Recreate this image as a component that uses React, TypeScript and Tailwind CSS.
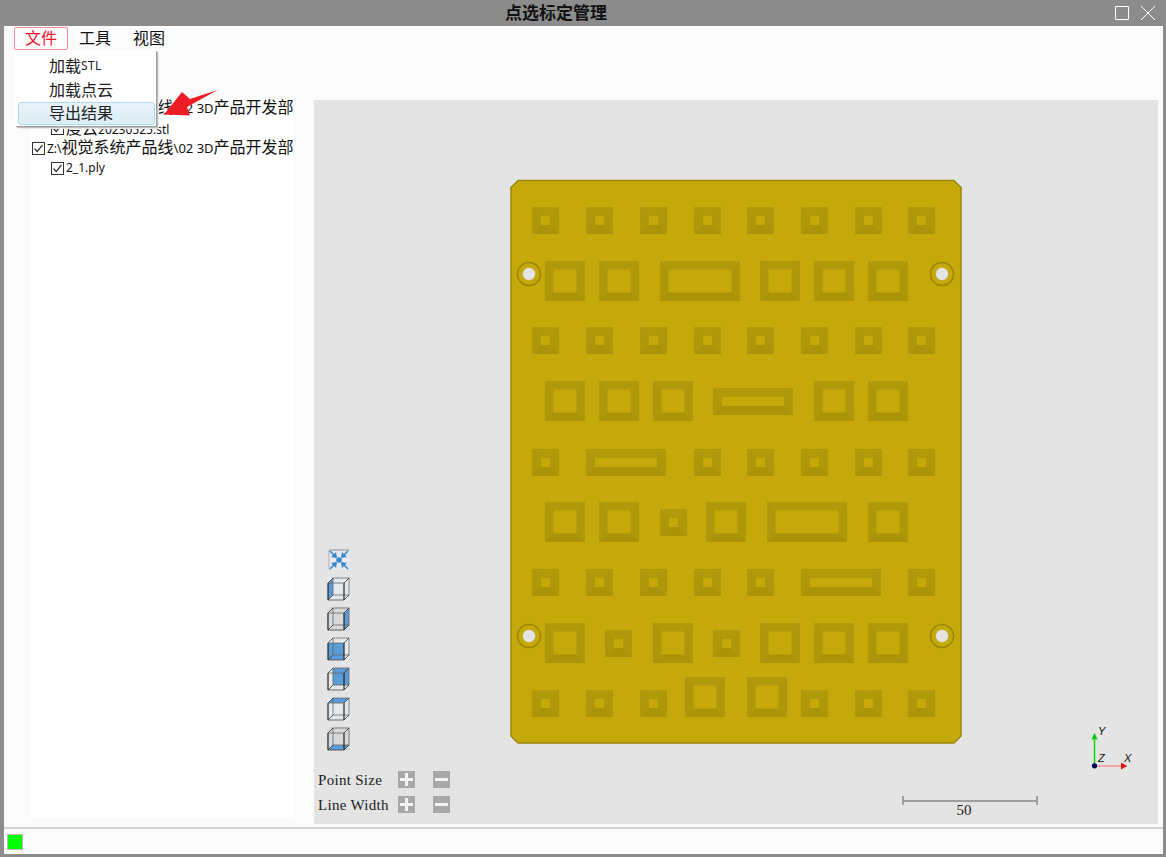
const cjk = '[font-family:"Noto_Sans","Noto_Sans_CJK_SC",sans-serif]';

type Sq = [number, number, number, number];

const S = 27;
const L = 40;

// x, y (top-left), w, h of every recess on the plate
const recesses: Sq[] = [
  ...[532, 586, 640, 694, 747, 801, 855, 908].map((x): Sq => [x, 207, S, S]),
  [545, 261, L, L], [599, 261, L, L], [660, 261, 80, L], [760, 261, L, L], [814, 261, L, L], [868, 261, L, L],
  ...[532, 586, 640, 694, 747, 801, 855, 908].map((x): Sq => [x, 327, S, S]),
  [545, 381, L, L], [599, 381, L, L], [653, 381, L, L], [713, 388, 80, S], [814, 381, L, L], [868, 381, L, L],
  [532, 449, S, S], [586, 449, 80, S], [694, 449, S, S], [747, 449, S, S], [801, 449, S, S], [855, 449, S, S], [908, 449, S, S],
  [545, 502, L, L], [599, 502, L, L], [660, 509, S, S], [706, 502, L, L], [767, 502, 80, L], [868, 502, L, L],
  [532, 569, S, S], [586, 569, S, S], [640, 569, S, S], [694, 569, S, S], [747, 569, S, S], [801, 569, 80, S], [908, 569, S, S],
  [545, 623, L, L], [605, 630, S, S], [653, 623, L, L], [713, 630, S, S], [760, 623, L, L], [814, 623, L, L], [868, 623, L, L],
  [532, 690, S, S], [586, 690, S, S], [640, 690, S, S], [685, 677, L, L], [747, 677, L, L], [801, 690, S, S], [855, 690, S, S], [908, 690, S, S],
];

const holes = [[529, 274], [942, 274], [529, 636], [942, 636]];

function Recess({ r }: { r: Sq }) {
  const [x, y, w, h] = r;
  const b = h === L ? 8.5 : 9;
  const x2 = x + w;
  const y2 = y + h;
  return (
    <g>
      <rect x={x} y={y} width={w} height={h} fill="#ae970a" />
      <polygon points={`${x},${y2} ${x + b},${y2 - b} ${x2 - b},${y2 - b} ${x2},${y2}`} fill="#aa9309" />
      <polygon points={`${x},${y} ${x + b},${y + b} ${x2 - b},${y + b} ${x2},${y}`} fill="#b09a0a" />
      <rect x={x + b} y={y + b} width={w - 2 * b} height={h - 2 * b} fill="#c5a809" />
    </g>
  );
}

function Plate() {
  return (
    <svg className="absolute inset-0" width="844" height="724" viewBox="314 100 844 724">
      <polygon
        points="518,180.5 954,180.5 961,187.5 961,736 954,743 518,743 511,736 511,187.5"
        fill="#c5a809"
        stroke="#9b8608"
        strokeWidth="1.5"
      />
      {recesses.map((r, i) => (
        <Recess key={i} r={r} />
      ))}
      {holes.map(([cx, cy]) => (
        <g key={cx + '-' + cy}>
          <circle cx={cx} cy={cy} r="11.5" fill="#c5a809" stroke="#9b8608" strokeWidth="1.5" />
          <circle cx={cx} cy={cy} r="6.5" fill="#e4e4e4" stroke="#b39c10" strokeWidth="0.5" />
        </g>
      ))}
      {/* axis triad */}
      <line x1="1094.5" y1="765.5" x2="1094.5" y2="740" stroke="#00e000" strokeWidth="1.5" />
      <polygon points="1094.5,733 1091.5,739.5 1097.5,739.5" fill="#00c800" />
      <line x1="1094.5" y1="766" x2="1127" y2="766" stroke="#f4a6a6" strokeWidth="2" />
      <polygon points="1127,766 1121,762.5 1121,769.5" fill="#e01010" />
      <circle cx="1094.5" cy="765.8" r="2.6" fill="#00005a" />
      <text x="1098" y="735" fontSize="11" fontStyle="italic" fontFamily="Liberation Sans, sans-serif" fill="#111">Y</text>
      <text x="1098" y="762" fontSize="11" fontStyle="italic" fontFamily="Liberation Sans, sans-serif" fill="#111">Z</text>
      <text x="1124" y="762" fontSize="11" fontStyle="italic" fontFamily="Liberation Sans, sans-serif" fill="#111">X</text>
    </svg>
  );
}

type Face = 'left' | 'right' | 'front' | 'back' | 'top' | 'bottom';

const faces: Record<Face, string> = {
  left: '1,6 6,1 6,18 1,23',
  right: '17,6 22,1 22,18 17,23',
  front: '1,6 17,6 17,23 1,23',
  back: '6,1 22,1 22,18 6,18',
  top: '1,6 6,1 22,1 17,6',
  bottom: '1,23 6,18 22,18 17,23',
};

function CubeIcon({ face, dark }: { face: Face; dark?: boolean }) {
  return (
    <svg width="24" height="24" viewBox="0 0 24 24" className="block">
      <rect x="0" y="0" width="23" height="24" fill={dark ? '#d6d8da' : '#e6e9ec'} />
      <polygon points={faces[face]} fill="#5b9bd8" />
      <g fill="none" stroke="#333" strokeWidth="0.8">
        <rect x="6" y="1" width="16" height="17" stroke="#666" />
        <path d="M1 6 6 1M17 6 22 1M17 23 22 18M1 23 6 18" />
        <path d="M1 6V23" strokeWidth="1.2" stroke="#222" />
        <path d="M17 6V23" strokeWidth="1.2" stroke="#222" />
        <path d="M1 6H17" stroke="#666" />
        <path d="M1 23H17" stroke="#444" />
      </g>
    </svg>
  );
}

function FitIcon() {
  return (
    <svg width="24" height="24" viewBox="0 0 24 24" className="block -mb-[1px]">
      <rect x="2" y="2" width="20" height="20" fill="#e6eaee" />
      <path d="M2 2H22" stroke="#8a8f96" strokeWidth="1" />
      <path d="M2 2V22" stroke="#aab0b8" strokeWidth="1" />
      <g stroke="#3d86cc" strokeWidth="1.6">
        <path d="M3 3 9 9M21 3 15 9M3 21 9 15M21 21 15 15" />
      </g>
      <g fill="#3d86cc">
        <circle cx="12" cy="12" r="2.8" />
        <polygon points="10,10 4,9 9,4" />
        <polygon points="14,10 20,9 15,4" />
        <polygon points="10,14 4,15 9,20" />
        <polygon points="14,14 20,15 15,20" />
      </g>
    </svg>
  );
}

function SizeButton({ minus }: { minus?: boolean }) {
  return (
    <button className="w-[17px] h-[17px] bg-[#a8a8a8] flex items-center justify-center">
      <svg width="13" height="13" viewBox="0 0 13 13">
        <rect x="0" y="5" width="13" height="3" fill="#f4f4f4" />
        {!minus && <rect x="5" y="0" width="3" height="13" fill="#f4f4f4" />}
      </svg>
    </button>
  );
}

function SizeRow({ label }: { label: string }) {
  return (
    <div className="flex items-center h-[17px]">
      <span className="w-[80px] mt-[2px] text-[15px] text-[#222] [font-family:'Liberation_Serif',serif] tracking-[0.3px]">{label}</span>
      <SizeButton />
      <span className="w-[18px]" />
      <SizeButton minus />
    </div>
  );
}

function Check({ left }: { left: string }) {
  return (
    <span className={`${left} w-[13px] h-[13px] shrink-0 border border-[#333] bg-white flex items-center justify-center`}>
      <svg width="11" height="11" viewBox="0 0 11 11">
        <path d="M1.5 5.5 4.2 8.5 9.5 2" fill="none" stroke="#333" strokeWidth="1.2" />
      </svg>
    </span>
  );
}

function TreeRoot() {
  return (
    <div className="h-[20px] flex items-center whitespace-nowrap">
      <Check left="ml-[3px]" />
      <span className="ml-[2px] text-[16px] text-[#111] leading-[20px]">
        <span className="text-[12px]">Z:\</span>视觉系统产品线<span className="text-[13px]">\02 3D</span>产品开发部
      </span>
    </div>
  );
}

function TreeFile({ children }: { children: React.ReactNode }) {
  return (
    <div className="h-[20px] flex items-center whitespace-nowrap">
      <Check left="ml-[22px]" />
      <span className="ml-[2px] text-[12px] text-[#111]">{children}</span>
    </div>
  );
}

function FileMenu() {
  return (
    <div className="absolute left-[11px] top-[24px] w-[141px] h-[76px] bg-white shadow-[1px_1px_0_#9f9f9f,2px_2px_0_#bdbdbd,3px_3px_0_#e8e8e8] z-10 pt-[4px] text-[16px] text-[#222]">
      <div className="h-[24px] pl-[34px] flex items-center">
        加载<span className="text-[12px] tracking-[0.3px]">STL</span>
      </div>
      <div className="h-[24px] pl-[34px] flex items-center">加载点云</div>
      <div className="ml-[3px] mr-[1px] h-[23px] pl-[30px] pb-[1px] flex items-center rounded-[3px] border border-[#a8dcf2] bg-gradient-to-b from-[#e8f3f9] to-[#dcedf6]">
        导出结果
      </div>
    </div>
  );
}

export default function App() {
  return (
    <div className={`w-[1166px] h-[857px] flex flex-col bg-[#8c8c8c] overflow-hidden ${cjk}`}>
      {/* title bar */}
      <header className="h-[26px] shrink-0 flex items-center">
        <div className="flex-1 text-center text-[17px] font-bold text-[#111]">点选标定管理</div>
        <div className="w-[54px] pl-[3px] flex items-center gap-[12px]">
          <span className="w-[14px] h-[14px] shrink-0 border border-white rounded-[1px]" />
          <svg width="14" height="14" viewBox="0 0 14 14" className="shrink-0">
            <path d="M0 0 14 14M14 0 0 14" stroke="#fff" strokeWidth="1" />
          </svg>
        </div>
      </header>

      <div className="relative flex-1 ml-[4px] mr-[3px] mb-[3px] bg-[#fbfbfb] flex flex-col min-h-0">
        {/* menu bar */}
        <nav className="h-[24px] shrink-0 flex items-center pl-[10px] text-[16px] text-[#111]">
          <span className="w-[54px] h-[23px] flex items-center justify-center border border-[#f08c98] rounded-[2px] bg-white text-[#f01030]">文件</span>
          <span className="ml-[11px]">工具</span>
          <span className="ml-[22px]">视图</span>
        </nav>
        <FileMenu />

        <div className="flex-1 flex min-h-0 pl-[25px] pr-[5px] pt-[50px] pb-[3px] gap-[21px]">
          {/* file tree */}
          <aside className="w-[264px] -mt-[2px] mb-[6px] bg-white overflow-hidden">
            <TreeRoot />
            <TreeFile><span className="text-[16px]">度云</span>20230525.stl</TreeFile>
            <TreeRoot />
            <TreeFile>2_1.ply</TreeFile>
          </aside>

          {/* 3d view */}
          <main className="relative flex-1 bg-[#e4e4e4]">
            <Plate />
            <div className="absolute left-[13px] top-[448px] flex flex-col gap-[6px]">
              <FitIcon />
              <CubeIcon face="left" />
              <CubeIcon face="right" dark />
              <CubeIcon face="front" />
              <CubeIcon face="back" />
              <CubeIcon face="top" />
              <CubeIcon face="bottom" dark />
            </div>
            <div className="absolute left-[4px] top-[671px] flex flex-col gap-[8px]">
              <SizeRow label="Point Size" />
              <SizeRow label="Line Width" />
            </div>
            <div className="absolute left-[588px] top-[696px] w-[136px] h-[9px] flex items-center border-x-2 border-[#a0a0a0]">
              <div className="w-full h-[2px] bg-[#a0a0a0]" />
            </div>
            <div className="absolute left-[589px] top-[699px] w-[122px] text-center text-[15px] text-[#222] [font-family:'Liberation_Serif',serif]">50</div>
          </main>
        </div>

        {/* status bar */}
        <footer className="h-[27px] shrink-0 border-t-2 border-[#d4d4d4] flex items-center pl-[3px]">
          <span className="w-[16px] h-[16px] bg-[#00ff00] border border-[#bbbbbb]" />
        </footer>

        {/* annotation arrow */}
        <svg className="absolute left-[150px] top-[58px] z-20" width="70" height="36" viewBox="150 84 70 36">
          <polygon points="213.5,90 186,99 178,92 160,114.5 186,115.5 183,107" fill="#ee1c25" />
        </svg>
      </div>
    </div>
  );
}
